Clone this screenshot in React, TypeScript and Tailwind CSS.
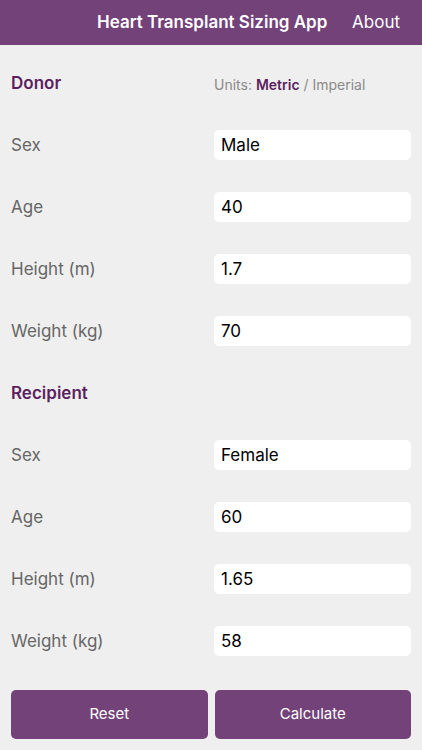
import { useState } from "react";

type Field = { label: string; value: string };

const donor: Field[] = [
  { label: "Sex", value: "Male" },
  { label: "Age", value: "40" },
  { label: "Height (m)", value: "1.7" },
  { label: "Weight (kg)", value: "70" },
];

const recipient: Field[] = [
  { label: "Sex", value: "Female" },
  { label: "Age", value: "60" },
  { label: "Height (m)", value: "1.65" },
  { label: "Weight (kg)", value: "58" },
];

function Row({ label, value }: Field) {
  const [val, setVal] = useState(value);
  return (
    <div className="h-[62px] flex items-center">
      <div className="w-[214px] shrink-0 pl-[11px] pt-[2px] text-[17px] text-[#666666]">{label}</div>
      <input
        value={val}
        onChange={(e) => setVal(e.target.value)}
        className="w-[197px] h-[30px] bg-white rounded-[5px] px-[7px] text-[17px] text-black outline-none"
      />
    </div>
  );
}

function SectionTitle({ title, units }: { title: string; units?: boolean }) {
  return (
    <div className="h-[62px] flex items-center pt-[2px]">
      <div className="w-[214px] shrink-0 pl-[11px] text-[17px] font-semibold text-[#5b1f60]">{title}</div>
      {units && (
        <div className="text-[14px] text-[#8a8a8a] whitespace-nowrap">
          Units: <span className="font-semibold text-[#5b1f60]">Metric</span> / Imperial
        </div>
      )}
    </div>
  );
}

export default function App() {
  return (
    <div
      className="w-[422px] h-[750px] bg-[#efefef] flex flex-col"
      style={{ fontFamily: "Inter, 'Noto Sans', sans-serif" }}
    >
      <header className="h-[45px] bg-[#724279] flex items-center text-white text-[17px] whitespace-nowrap">
        <div className="ml-[97px] font-semibold">Heart Transplant Sizing App</div>
        <div className="ml-auto mr-[22px]">About</div>
      </header>
      <div className="pt-[7px]">
        <SectionTitle title="Donor" units />
        {donor.map((f) => (
          <Row key={"d" + f.label} {...f} />
        ))}
        <SectionTitle title="Recipient" />
        {recipient.map((f) => (
          <Row key={"r" + f.label} {...f} />
        ))}
      </div>
      <div className="flex gap-[7px] px-[11px] pt-[18px]">
        <button className="flex-1 h-[49px] rounded-[5px] bg-[#724279] text-white text-[15px]">Reset</button>
        <button className="flex-1 h-[49px] rounded-[5px] bg-[#724279] text-white text-[15px]">Calculate</button>
      </div>
    </div>
  );
}
